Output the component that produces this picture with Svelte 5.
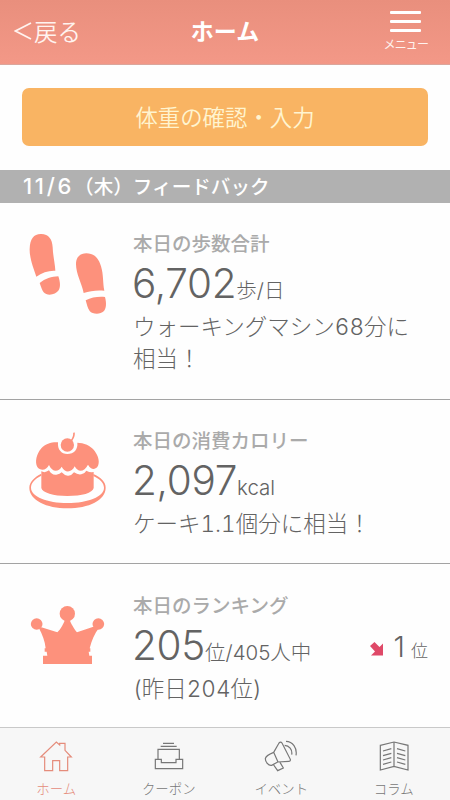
<script lang="ts">
	// Daily health feedback: steps, calories and ranking.
	const cards = [
		{
			icon: 'steps',
			title: '本日の歩数合計',
			value: '6,702',
			unit: '歩/日',
			detail: 'ウォーキングマシン68分に相当！'
		},
		{
			icon: 'cake',
			title: '本日の消費カロリー',
			value: '2,097',
			unit: 'kcal',
			detail: 'ケーキ1.1個分に相当！'
		},
		{
			icon: 'crown',
			title: '本日のランキング',
			value: '205',
			unit: '位/405人中',
			detail: '(昨日204位)',
			change: '1'
		}
	];
	const tabs = [
		{ id: 'home', label: 'ホーム' },
		{ id: 'coupon', label: 'クーポン' },
		{ id: 'event', label: 'イベント' },
		{ id: 'column', label: 'コラム' }
	];
</script>

<div class="screen">
	<header>
		<button class="back">
			<svg viewBox="0 0 18 20"><path d="M17 2 1.5 10 17 18" /></svg>戻る
		</button>
		<h1>ホーム</h1>
		<button class="menu">
			<span class="bars"><i></i><i></i><i></i></span>
			メニュー
		</button>
	</header>

	<div class="action">
		<button class="weight">体重の確認・入力</button>
	</div>
	<h2><span class="date">11/6</span>（木）フィードバック</h2>

	<main>
		{#each cards as card (card.icon)}
			<section class="card {card.icon}">
				{#if card.icon === 'steps'}
					<svg class="icon" viewBox="84 33 240 264">
						<path d="M109 167C102 145 88 112 89 83C90 54 101 39 122 39C145 38 157 54 158 79C159 106 165 127 166 149C146 148 126 154 109 167Z" />
						<path d="M119 186C135 173 155 167 175 166C181 183 182 199 176 208C167 222 141 226 131 214C126 207 123 197 119 186Z" />
						<path d="M251 216C246 190 228 158 228 130C228 108 240 97 259 97C281 97 296 110 303 136C311 161 308 187 313 209C292 207 270 209 251 216Z" />
						<path d="M257 238C275 229 295 226 315 228C320 247 319 263 311 271C301 281 277 280 269 270C262 261 261 250 257 238Z" />
					</svg>
				{:else if card.icon === 'cake'}
					<svg class="icon" viewBox="84 57 240 264">
						<path fill-rule="evenodd" d="M124 191C103 201 88 216 88 233C88 270 140 295 202 295C267 295 317 270 317 233C317 216 303 202 280 192V198C300 207 312 219 312 233C312 260 264 279 202 279C142 279 93 260 93 233C93 219 104 206 124 197Z" />
						<path d="M124 184Q135 190 147 181Q155 196 169 194Q180 192 185 187Q195 198 205 197Q216 196 222 187Q233 195 244 193Q255 190 259 182Q270 188 281 186V234C278 249 246 258 202 258C160 258 127 248 124 234Z" />
						<path d="M112 171C104 157 109 132 124 115C137 101 154 96 174 97C172 119 184 132 202 132C222 132 234 118 232 98C251 98 272 106 284 123C295 138 301 158 292 171C285 179 273 180 264 164C254 184 235 190 224 169C216 187 195 191 185 170C176 187 156 187 147 165C139 182 121 183 112 171Z" />
						<circle cx="202" cy="105" r="20" />
						<path class="stem" d="M213 93Q223 82 222 68" />
					</svg>
				{:else}
					<svg class="icon" viewBox="84 42 240 264">
						<circle cx="202" cy="101" r="23" />
						<circle cx="110" cy="132" r="17.5" />
						<circle cx="295" cy="132" r="17.5" />
						<path d="M196 117H208C211 128 224 149 231 157L289 137L296 145C284 162 275 180 269 205H271V215H266L268 227H276V252H129V227H142L140 215H134V205H137C135 184 127 164 117 145L124 142L172 157C183 147 191 130 196 117Z" />
					</svg>
				{/if}
				<div class="body">
					<h3>{card.title}</h3>
					<div class="figures">
						<strong>{card.value}</strong>
						<span class="unit">{card.unit}</span>
						{#if card.change}
							<span class="change">
								<svg viewBox="0 0 14 14"><path d="M0 4 4.5 0 9.5 5 13 1.5V13.5H1L5 9.5Z" /></svg>
								<b>{card.change}</b>
								<small>位</small>
							</span>
						{/if}
					</div>
					<p>{card.detail}</p>
				</div>
			</section>
		{/each}
	</main>

	<nav>
		{#each tabs as tab (tab.id)}
			<button class="tab" class:active={tab.id === 'home'}>
				{#if tab.id === 'home'}
					<svg viewBox="116 60 102 102">
						<path d="M121 111 168 66 178 75V70H194V91L213 111H202V152H178V122H157V152H133V111Z" />
					</svg>
				{:else if tab.id === 'coupon'}
					<svg viewBox="456 60 102 102">
						<path d="M489 70H522M482 79H530M474 118V88H538V118M466 118H484V128H528V118H548V146H466Z" />
					</svg>
				{:else if tab.id === 'event'}
					<svg viewBox="116 60 102 102">
						<path d="M145 97 161 69Q166 64 170 69L195 118Q196 124 190 124L157 126L139 136C129 138 120 125 120 116C121 108 127 104 145 97ZM145 97 158 126M145 135 157 152 174 144 164 127M178 76C191 76 202 89 199 104M182 64C202 64 216 84 212 106" />
					</svg>
				{:else}
					<svg viewBox="453 60 102 102">
						<path d="M463 76 504 66 546 76V150L504 139 463 150ZM504 66V139" />
						<path class="lines" d="M471 93 496 86M471 107 496 100M471 120 496 113M471 133 496 126M513 86 538 93M513 100 538 107M513 113 538 120M513 126 538 133" />
					</svg>
				{/if}
				<span>{tab.label}</span>
			</button>
		{/each}
	</nav>
</div>

<style>
	:global(body) {
		margin: 0;
	}
	.screen {
		display: flex;
		flex-direction: column;
		width: 450px;
		height: 800px;
		overflow: hidden;
		background: #fefefe;
		color: #636363;
		font-family: Inter, 'Noto Sans CJK JP', sans-serif;
		font-weight: 300;
	}
	button {
		padding: 0;
		border: 0;
		background: none;
		color: inherit;
		font: inherit;
	}
	h1,
	h2,
	h3,
	p {
		margin: 0;
	}
	header {
		box-sizing: border-box;
		display: grid;
		grid-template-columns: 1fr auto 1fr;
		flex: none;
		height: 65px;
		border-bottom: 1px solid #dba69c;
		background: linear-gradient(#e98f7d, #f39887);
		color: #fff3ef;
	}
	.back {
		display: flex;
		align-items: center;
		gap: 2px;
		padding: 0 0 2px 14px;
		font-size: 23.5px;
		font-weight: 350;
	}
	.back svg {
		width: 18px;
		height: 20px;
		fill: none;
		stroke: currentColor;
		stroke-width: 1.7;
	}
	h1 {
		color: #fff;
		font-size: 23px;
		font-weight: 700;
		line-height: 64px;
	}
	.menu {
		display: flex;
		flex-direction: column;
		align-items: center;
		justify-self: end;
		gap: 6px;
		padding: 11px 22px 0 0;
		font-size: 12px;
		font-weight: 400;
		line-height: 14px;
		letter-spacing: -0.9px;
	}
	.bars {
		display: grid;
		gap: 6px;
		width: 31px;
	}
	.bars i {
		height: 3px;
		border-radius: 1px;
		background: #fff;
	}
	.action {
		flex: none;
		padding: 22.5px 22px 24px;
	}
	.weight {
		display: block;
		width: 100%;
		height: 58.5px;
		padding-bottom: 2px;
		border-radius: 7px;
		background: #f9b463;
		color: #fff4d0;
		font-size: 22.4px;
		font-weight: 350;
	}
	h2 {
		flex: none;
		height: 33px;
		padding-left: 23px;
		background: #b1b1b1;
		color: #fff;
		font-size: 19.6px;
		font-weight: 500;
		line-height: 33px;
	}
	.date {
		font-size: 22px;
		letter-spacing: 2.7px;
	}
	main {
		flex: 1;
		display: grid;
		grid-template-rows: 197px 164px 1fr;
	}
	.card {
		box-sizing: border-box;
		display: flex;
		gap: 25px;
		padding: 29px 22px 0 28px;
		border-bottom: 1px solid #a3a3a3;
	}
	.crown {
		padding-top: 30px;
		border-bottom: 0;
	}
	.icon {
		flex: none;
		width: 80px;
		height: 88px;
		fill: #fd917c;
	}
	.stem {
		fill: none;
		stroke: #fd917c;
		stroke-width: 5;
	}
	.body {
		flex: 1;
		min-width: 0;
	}
	h3 {
		color: #aaa;
		font-size: 19.5px;
		font-weight: 500;
		line-height: 24px;
	}
	.figures {
		display: flex;
		align-items: baseline;
		height: 40px;
		margin: 8px 0 7px -1px;
		line-height: 40px;
	}
	strong {
		font-size: 40.5px;
		font-weight: 300;
		letter-spacing: -0.3px;
	}
	.unit {
		font-size: 20.5px;
	}
	.change {
		display: flex;
		align-items: baseline;
		align-self: flex-start;
		margin: 1px 0 0 auto;
	}
	.change svg {
		align-self: center;
		width: 14px;
		height: 14px;
		margin: 0 10px 0 0;
		fill: #df4968;
	}
	.change b {
		margin-right: 6px;
		font-size: 29px;
		font-weight: 300;
	}
	.change small {
		font-size: 17px;
	}
	p {
		max-width: 280px;
		font-size: 22.5px;
		font-variant-numeric: tabular-nums;
		line-height: 32px;
	}
	nav {
		box-sizing: border-box;
		display: grid;
		grid-template-columns: repeat(4, 1fr);
		flex: none;
		height: 73px;
		border-top: 1px solid #c9c9c9;
		background: #f7f7f7;
	}
	.tab {
		display: flex;
		flex-direction: column;
		align-items: center;
		padding-top: 12px;
		color: #777;
		font-size: 13.4px;
		line-height: 16px;
	}
	.tab svg {
		width: 34px;
		height: 34px;
		margin-bottom: 7px;
		fill: none;
		stroke: currentColor;
		stroke-width: 3.6;
	}
	.tab .lines {
		stroke-width: 3.5;
	}
	.active {
		color: #e58c7b;
	}
</style>
